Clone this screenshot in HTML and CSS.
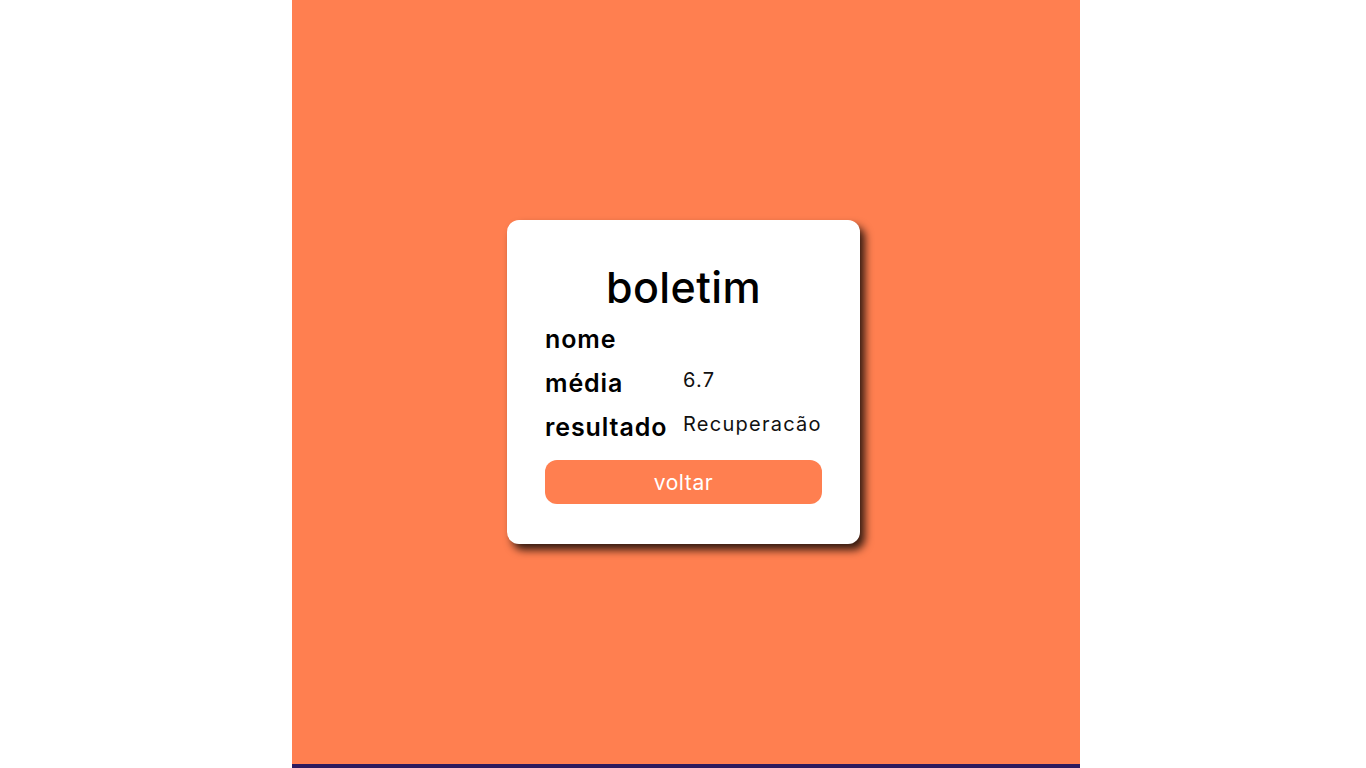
FILE: index.html
```html
<!DOCTYPE html>
<html lang="pt-BR">
<head>
<meta charset="utf-8">
<title>boletim</title>
<link rel="stylesheet" href="styles.css">
</head>
<body>
<main class="page">
  <section class="card">
    <h1 class="title">boletim</h1>
    <div class="rows">
      <div class="label">nome</div><div class="value"></div>
      <div class="label">média</div><div class="value">6.7</div>
      <div class="label">resultado</div><div class="value">Recuperacão</div>
    </div>
    <button class="btn" type="button">voltar</button>
  </section>
</main>
</body>
</html>
```
FILE: styles.css
```css
html, body {
  margin: 0;
  padding: 0;
  background: #ffffff;
  font-family: "Inter", "Noto Sans", sans-serif;
}
.page {
  width: 788px;
  height: 764px;
  margin-left: 292px;
  background: #ff7f50;
  border-bottom: 4px solid #2d1b5e;
  display: flex;
  align-items: center;
  justify-content: center;
}
.card {
  box-sizing: border-box;
  width: 353px;
  height: 324px;
  margin-left: -5px;
  background: #ffffff;
  border-radius: 12px;
  box-shadow: 5px 6px 8px rgba(0, 0, 0, 0.8);
  padding: 43px 38px 0 38px;
  display: flex;
  flex-direction: column;
}
.title {
  margin: 0;
  text-align: center;
  font-size: 43px;
  font-weight: 500;
  line-height: 48px;
  letter-spacing: 0.4px;
  color: #000;
}
.rows {
  display: grid;
  grid-template-columns: 138px 1fr;
  row-gap: 8px;
  margin-top: 10px;
}
.label {
  font-size: 25px;
  font-weight: 600;
  line-height: 36px;
  letter-spacing: 0.9px;
  color: #000;
}
.value {
  font-size: 20px;
  line-height: 30px;
  letter-spacing: 1.25px;
  color: #111;
}
.btn {
  margin-top: 15px;
  height: 44px;
  flex: 0 0 44px;
  width: 100%;
  border: none;
  border-radius: 12px;
  background: #ff7f50;
  color: #fff;
  font-family: inherit;
  font-size: 21px;
  letter-spacing: 0.6px;
}
```
